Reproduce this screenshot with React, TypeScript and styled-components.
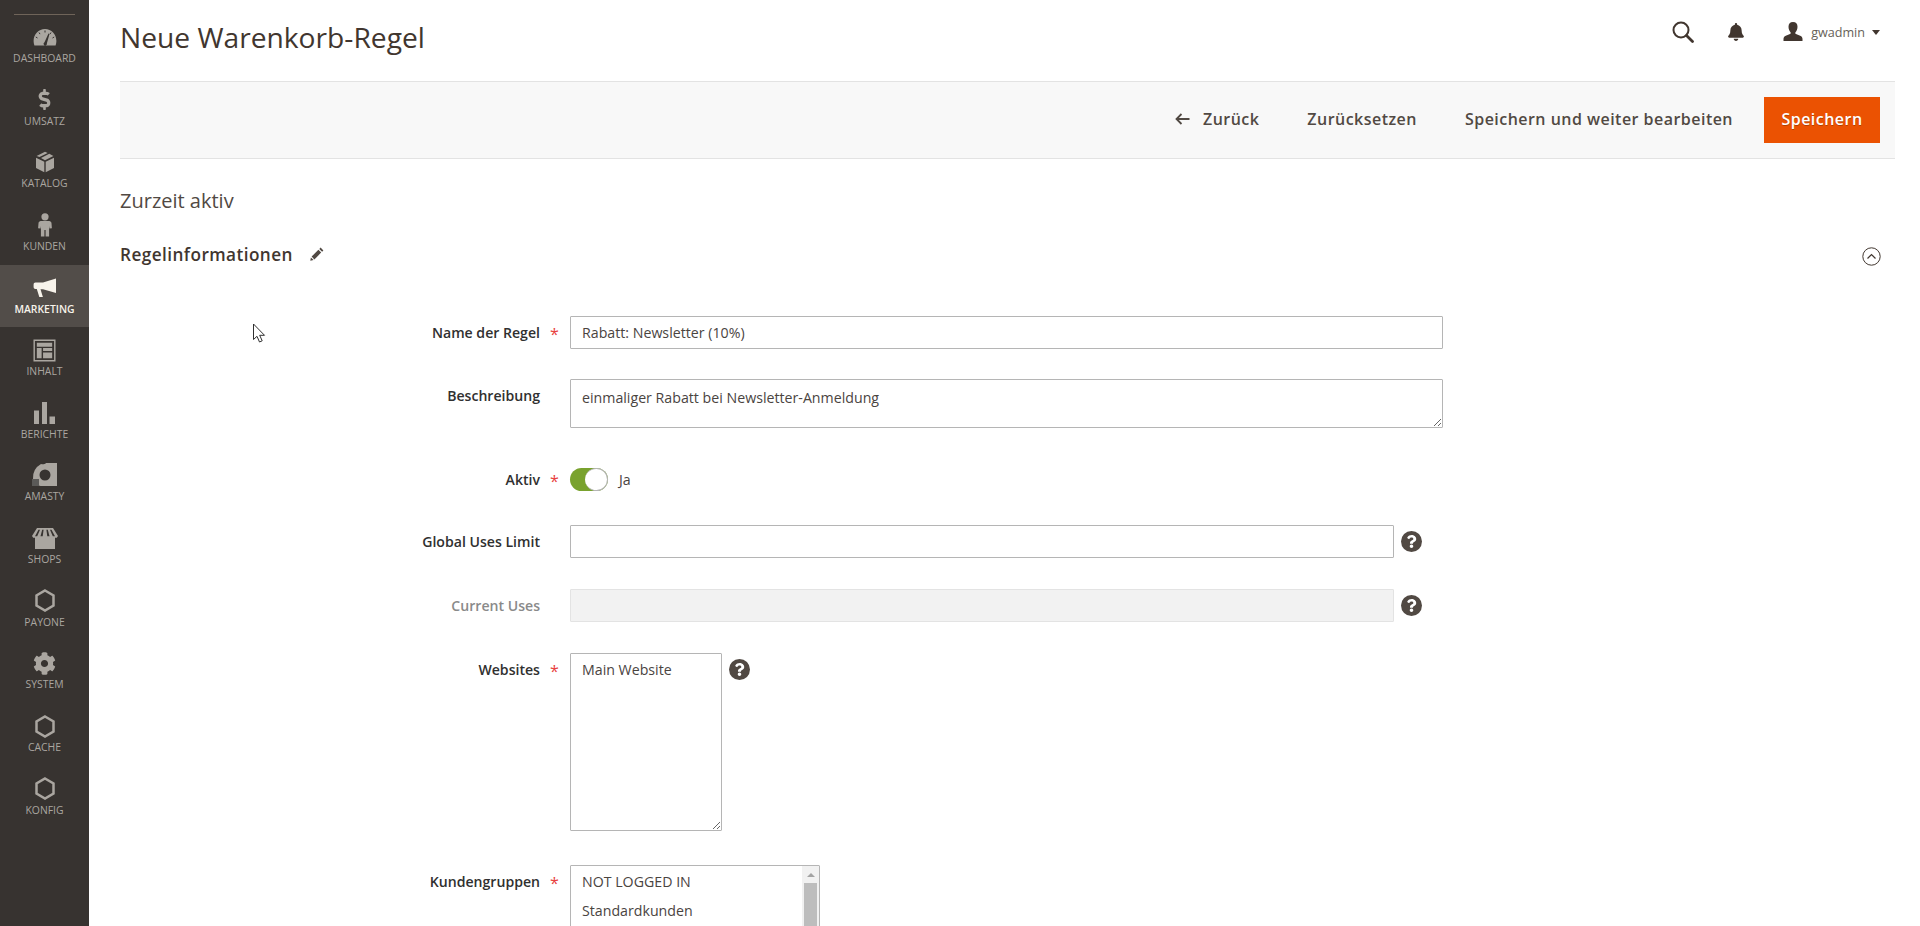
import React from 'react';
import styled, { createGlobalStyle } from 'styled-components';
import { FaBell, FaCog, FaDollarSign, FaQuestion } from 'react-icons/fa';

const Global = createGlobalStyle`
  html, body { margin: 0; padding: 0; height: 926px; overflow: hidden; background: #fff; }
  body { font-family: "Open Sans", "Liberation Sans", sans-serif; color: #41362f; }
  * { box-sizing: border-box; }
`;

const Page = styled.div`
  position: relative;
  display: flex;
  width: 1920px;
  height: 926px;
  overflow: hidden;
`;

const Sidebar = styled.nav`
  width: 89px;
  flex: none;
  height: 926px;
  background: #373330;
  padding-top: 14px;
`;

const LogoRule = styled.div`
  height: 1px;
  margin: 0 14px -1px;
  background: #6f6459;
`;

const NavItem = styled.a<{ $active?: boolean }>`
  display: flex;
  flex-direction: column;
  align-items: center;
  height: 62.65px;
  padding-top: 11px;
  background: ${p => (p.$active ? '#524d49' : 'transparent')};
  color: ${p => (p.$active ? '#f7f3eb' : '#aaa6a0')};
  font-size: 10.4px;
  font-weight: ${p => (p.$active ? 600 : 400)};
  line-height: 14px;
  white-space: nowrap;
`;

const NavIcon = styled.span<{ $active?: boolean }>`
  display: flex;
  align-items: center;
  justify-content: center;
  width: 30px;
  height: 24px;
  margin-bottom: 2px;
  color: ${p => (p.$active ? '#f7f3eb' : '#aaa6a0')};
  svg { display: block; }
`;

const Main = styled.main`
  flex: 1;
  min-width: 0;
  padding: 0 25px 0 31px;
`;

const Header = styled.header`
  display: flex;
  align-items: center;
  justify-content: space-between;
  height: 81px;
`;

const PageTitle = styled.h1`
  margin: 0 0 8px;
  font-size: 28.2px;
  font-weight: 400;
  line-height: 38px;
  color: #41362f;
`;

const HeaderTools = styled.div`
  display: flex;
  align-items: center;
  height: 40px;
  margin: 0 15px 17px 0;
  color: #41362f;
`;

const ToolIcon = styled.span<{ $mr: number }>`
  display: flex;
  margin-right: ${p => p.$mr}px;
`;

const UserName = styled.span`
  font-size: 12.6px;
  color: #675f58;
  margin-right: 7px;
`;

const Caret = styled.span`
  width: 0;
  height: 0;
  border: 4px solid transparent;
  border-top: 5px solid #41362f;
  border-bottom: 0;
`;

const Toolbar = styled.div`
  display: flex;
  align-items: center;
  justify-content: flex-end;
  height: 78px;
  padding-right: 15px;
  background: #f8f8f8;
  border-top: 1px solid #e3e3e3;
  border-bottom: 1px solid #e3e3e3;
`;

const TextAction = styled.a`
  display: flex;
  align-items: center;
  margin: -2px 48px 0 0;
  font-size: 16px;
  font-weight: 600;
  letter-spacing: 0.47px;
  color: #514943;
  svg { margin-right: 13px; }
`;

const PrimaryButton = styled.button`
  width: 116px;
  height: 46px;
  margin: 0 0 0 -17px;
  border: 1px solid #eb5202;
  background: #eb5202;
  color: #fff;
  font-family: inherit;
  font-size: 16px;
  font-weight: 600;
  letter-spacing: 0.47px;
  text-shadow: 0 1px 0 rgba(0, 0, 0, 0.25);
  padding: 0 0 2px;
`;

const Status = styled.div`
  margin-top: 30px;
  font-size: 20px;
  line-height: 24px;
  color: #514943;
`;

const SectionHead = styled.div`
  display: flex;
  align-items: center;
  justify-content: space-between;
  height: 30px;
  margin-top: 27px;
  margin-bottom: 46px;
`;

const SectionTitle = styled.h2`
  display: flex;
  align-items: center;
  margin: -2px 0 0;
  font-size: 17.2px;
  font-weight: 600;
  letter-spacing: 0.43px;
  color: #41362f;
  svg { margin-left: 17px; color: #514943; }
`;

const Collapse = styled.span`
  display: flex;
  margin: 2px 14px 0 0;
  color: #41362f;
`;

const Row = styled.div<{ $mb?: number }>`
  display: flex;
  align-items: flex-start;
  margin-bottom: ${p => p.$mb ?? 30}px;
`;

const Label = styled.label<{ $muted?: boolean }>`
  width: 420px;
  flex: none;
  text-align: right;
  font-size: 14.1px;
  font-weight: 600;
  line-height: 33px;
  color: ${p => (p.$muted ? '#8a8a8a' : '#303030')};
`;

const Star = styled.span<{ $on?: boolean }>`
  width: 30px;
  height: 33px;
  flex: none;
  padding: 2px 0 0 10px;
  font-size: 16px;
  line-height: 33px;
  color: #e8413e;
  visibility: ${p => (p.$on ? 'visible' : 'hidden')};
`;

const TextInput = styled.input<{ $w: number }>`
  display: block;
  width: ${p => p.$w}px;
  height: 33px;
  padding: 0 11px;
  border: 1px solid #b5b5b5;
  border-radius: 1px;
  outline: none;
  background: #fff;
  font-family: inherit;
  font-size: 14.2px;
  color: #4a443f;
  &:disabled { background: #f2f2f2; border-color: #e3e3e3; }
`;

const TextArea = styled.textarea<{ $w: number; $h: number; $pt: number }>`
  display: block;
  width: ${p => p.$w}px;
  height: ${p => p.$h}px;
  padding: ${p => p.$pt}px 11px 0;
  border: 1px solid #b5b5b5;
  border-radius: 1px;
  outline: none;
  background: #fff;
  font-family: inherit;
  font-size: 14.2px;
  line-height: 19px;
  color: #4a443f;
`;

const Toggle = styled.div`
  position: relative;
  width: 38px;
  height: 23px;
  margin-top: 5px;
  border-radius: 12px;
  background: #79a22e;
`;

const Knob = styled.span`
  position: absolute;
  top: 0;
  right: 0;
  width: 23px;
  height: 23px;
  border-radius: 50%;
  background: #fff;
  border: 1px solid #b5b5b5;
  border-left: 0;
`;

const ToggleText = styled.span`
  margin-left: 11px;
  font-size: 14.2px;
  line-height: 33px;
  color: #4a443f;
`;

const Help = styled.span`
  display: flex;
  align-items: center;
  justify-content: center;
  width: 21px;
  height: 21px;
  margin: 6px 0 0 7px;
  border-radius: 50%;
  background: #514943;
  color: #fff;
`;

const ListBox = styled.div`
  position: relative;
  width: 250px;
  height: 200px;
  padding: 1px 0 0 11px;
  border: 1px solid #b5b5b5;
  border-radius: 1px;
  overflow: hidden;
`;

const ListOption = styled.div`
  font-size: 14.2px;
  line-height: 29.4px;
  color: #4a443f;
`;

const ScrollTrack = styled.div`
  position: absolute;
  top: 0;
  right: 0;
  bottom: 0;
  width: 17px;
  background: #f1f1f1;
`;

const ScrollArrow = styled.span`
  position: absolute;
  top: 7px;
  left: 5px;
  width: 0;
  height: 0;
  border: 4px solid transparent;
  border-bottom: 4px solid #a3a3a3;
  border-top: 0;
`;

const ScrollThumb = styled.span`
  position: absolute;
  top: 17px;
  left: 2px;
  width: 13px;
  height: 120px;
  background: #bdbdbd;
`;

const Pointer = styled.svg`
  position: absolute;
  left: 252px;
  top: 323px;
`;

const Stroke = { fill: 'none', stroke: 'currentColor' } as const;

const Gauge = () => (
  <svg width="24" height="18" viewBox="0 0 24 18">
    <path fill="currentColor" fillRule="evenodd" d="M12 1C5.6 1 .6 6.4.6 13c0 1.600.3 3 .8 4.400h21.200c.5-1.400.8-2.800.8-4.400C23.400 6.400 18.400 1 12 1zM11.500 14.200l4-8.700 1 .4-2.600 9.300a1.700 1.700 0 1 1-2.400-1z" />
    <path stroke="#373330" strokeWidth="1" d="M12 2.500v2M6 4.500l1 1.600M2.800 9l1.700 1M18 4.500l-1 1.600M21.200 9l-1.700 1" />
  </svg>
);

const BoxIcon = () => (
  <svg width="20" height="22" viewBox="0 0 20 22">
    <path fill="currentColor" d="M1 6.800l8.300 4v10.500L1 17zM19 6.800l-8.300 4v10.500L19 17zM10 .8l2.700 1.200-8.200 4L1.600 5zM14.300 2.700l4.100 2.300-8.400 4.300-4-2.200z" />
  </svg>
);

const PersonIcon = () => (
  <svg width="14" height="24" viewBox="0 0 14 24">
    <circle cx="7" cy="3.800" r="3.600" fill="currentColor" />
    <path fill="currentColor" d="M2.800 8h8.400c1.200 0 2.200 1 2.300 2.200l.4 5-2.400.2-.4-2.400v10.500H7.600V17H6.400v6.500H2.900V13l-.4 2.400-2.400-.2.400-5C.6 9 1.600 8 2.800 8z" />
  </svg>
);

const Megaphone = () => (
  <svg width="24" height="24" viewBox="0 0 24 24">
    <path fill="currentColor" d="M23 2.500v14.500L10 13.300H7.500l2.400 7.800H6.300L3.800 13H2.500C1.300 13 .6 12.200.6 11V8.600c0-1.200.7-2 1.900-2H10z" />
  </svg>
);

const LayoutIcon = () => (
  <svg width="23" height="23" viewBox="0 0 24 24">
    <path fill="currentColor" fillRule="evenodd" d="M.5.500h23v23H.5zM2 2v20h20V2zM4 4h16v4H4zM4 9.500h5v10.500H4zM10.500 9.500H20v3h-9.500zM10.500 14H20v6h-9.500z" />
  </svg>
);

const BarsIcon = () => (
  <svg width="21" height="22" viewBox="0 0 21 22">
    <path fill="currentColor" d="M0 8.500h5V22H0zM8 0h5v22H8zM15.500 14.500H21V22h-5.500z" />
  </svg>
);

const AmastyIcon = () => (
  <svg width="26" height="24" viewBox="0 0 26 24">
    <path fill="currentColor" fillRule="evenodd" d="M14 0h11v23H8.500A8.500 8.500 0 0 1 1 15.500 16 16 0 0 1 9 1c1.500.6 3.500.6 5-1zM13 6.500a5.500 5.500 0 1 0 0 11 5.500 5.500 0 0 0 0-11z" />
    <rect x="0" y="16" width="7" height="7" fill="#5b5a58" />
  </svg>
);

const StoreIcon = () => (
  <svg width="26" height="21" viewBox="0 0 26 21">
    <path fill="currentColor" d="M5 0h16l5 8-1.200 1.800H23V21H3V9.800H1.200L0 8zM6.500 1.800L3 8.200h2.200L8 1.800zM10.200 1.800L8.500 8.200h2.200l.9-6.400zM14.400 1.800l.9 6.400h2.200l-1.700-6.400zM18 1.800l2.800 6.400H23l-3.500-6.400z" />
  </svg>
);

const Hex = () => (
  <svg width="20" height="23" viewBox="0 0 20 23">
    <path {...Stroke} strokeWidth="2.500" d="M10 1.500l8.500 5v10l-8.500 5-8.500-5v-10z" />
  </svg>
);

const items: { label: string; icon: React.ReactNode; active?: boolean }[] = [
  { label: 'DASHBOARD', icon: <Gauge /> },
  { label: 'UMSATZ', icon: <FaDollarSign size={21} /> },
  { label: 'KATALOG', icon: <BoxIcon /> },
  { label: 'KUNDEN', icon: <PersonIcon /> },
  { label: 'MARKETING', icon: <Megaphone />, active: true },
  { label: 'INHALT', icon: <LayoutIcon /> },
  { label: 'BERICHTE', icon: <BarsIcon /> },
  { label: 'AMASTY', icon: <AmastyIcon /> },
  { label: 'SHOPS', icon: <StoreIcon /> },
  { label: 'PAYONE', icon: <Hex /> },
  { label: 'SYSTEM', icon: <FaCog size={23} /> },
  { label: 'CACHE', icon: <Hex /> },
  { label: 'KONFIG', icon: <Hex /> },
];

export default function App() {
  return (
    <Page>
      <Global />
      <Sidebar>
        <LogoRule />
        {items.map(it => (
          <NavItem key={it.label} $active={it.active}>
            <NavIcon $active={it.active}>{it.icon}</NavIcon>
            {it.label}
          </NavItem>
        ))}
      </Sidebar>
      <Main>
        <Header>
          <PageTitle>Neue Warenkorb-Regel</PageTitle>
          <HeaderTools>
            <ToolIcon $mr={33}>
              <svg width="22" height="22" viewBox="0 0 22 22">
                <circle {...Stroke} cx="9" cy="9" r="7.500" strokeWidth="2" />
                <path {...Stroke} strokeWidth="2.800" strokeLinecap="round" d="M14.500 14.500l6 6" />
              </svg>
            </ToolIcon>
            <ToolIcon $mr={38}>
              <FaBell size={18} />
            </ToolIcon>
            <ToolIcon $mr={8}>
              <svg width="20" height="20" viewBox="0 0 20 20">
                <path fill="currentColor" d="M10 0c3 0 4.500 2 4.500 4.700 0 2.500-1 4.300-2 5.500-.4.600-.3 1.500.5 1.800l4.200 1.700c1.500.6 2.300 1.700 2.300 3.300V19H.5v-2c0-1.600.8-2.700 2.300-3.300L7 12c.8-.3.900-1.200.5-1.800-1-1.200-2-3-2-5.500C5.500 2 7 0 10 0z" />
              </svg>
            </ToolIcon>
            <UserName>gwadmin</UserName>
            <Caret />
          </HeaderTools>
        </Header>
        <Toolbar>
          <TextAction>
            <svg width="15" height="12" viewBox="0 0 15 12">
              <path {...Stroke} strokeWidth="1.800" d="M14.500 6H2M6.500 1L1.500 6l5 5" />
            </svg>
            Zurück
          </TextAction>
          <TextAction>Zurücksetzen</TextAction>
          <TextAction>Speichern und weiter bearbeiten</TextAction>
          <PrimaryButton>Speichern</PrimaryButton>
        </Toolbar>
        <Status>Zurzeit aktiv</Status>
        <SectionHead>
          <SectionTitle>
            Regelinformationen
            <svg width="14" height="14" viewBox="0 0 14 14">
              <path fill="currentColor" d="M10.600.600l2.800 2.800-1.300 1.300-2.800-2.800zM8.400 2.800l2.800 2.800-6.800 6.800-2.800-2.800zM.9 10.400l2.700 2.700-3.300.6z" />
            </svg>
          </SectionTitle>
          <Collapse>
            <svg width="19" height="19" viewBox="0 0 19 19">
              <circle {...Stroke} cx="9.500" cy="9.500" r="8.700" strokeWidth="1" />
              <path {...Stroke} strokeWidth="1.200" d="M5.500 11.500l4-4 4 4" />
            </svg>
          </Collapse>
        </SectionHead>

        <Row>
          <Label>Name der Regel</Label>
          <Star $on>*</Star>
          <TextInput $w={873} readOnly value="Rabatt: Newsletter (10%)" />
        </Row>
        <Row $mb={35}>
          <Label>Beschreibung</Label>
          <Star />
          <TextArea $w={873} $h={49} $pt={8} readOnly value="einmaliger Rabatt bei Newsletter-Anmeldung" />
        </Row>
        <Row $mb={29}>
          <Label>Aktiv</Label>
          <Star $on>*</Star>
          <Toggle>
            <Knob />
          </Toggle>
          <ToggleText>Ja</ToggleText>
        </Row>
        <Row $mb={31}>
          <Label>Global Uses Limit</Label>
          <Star />
          <TextInput $w={824} readOnly value="" />
          <Help>
            <FaQuestion size={13} />
          </Help>
        </Row>
        <Row $mb={31}>
          <Label $muted>Current Uses</Label>
          <Star />
          <TextInput $w={824} disabled value="" />
          <Help>
            <FaQuestion size={13} />
          </Help>
        </Row>
        <Row $mb={34}>
          <Label>Websites</Label>
          <Star $on>*</Star>
          <TextArea $w={152} $h={178} $pt={6} readOnly value="Main Website" />
          <Help>
            <FaQuestion size={13} />
          </Help>
        </Row>
        <Row>
          <Label>Kundengruppen</Label>
          <Star $on>*</Star>
          <ListBox>
            <ListOption>NOT LOGGED IN</ListOption>
            <ListOption>Standardkunden</ListOption>
            <ScrollTrack>
              <ScrollArrow />
              <ScrollThumb />
            </ScrollTrack>
          </ListBox>
        </Row>
      </Main>
      <Pointer width="14" height="21" viewBox="0 0 14 21">
        <path fill="#fff" stroke="#303030" strokeWidth="1" d="M1.500 1v15.500l3.500-3.200 2.500 5.700 2.700-1.200-2.500-5.500h4.800z" />
      </Pointer>
    </Page>
  );
}
